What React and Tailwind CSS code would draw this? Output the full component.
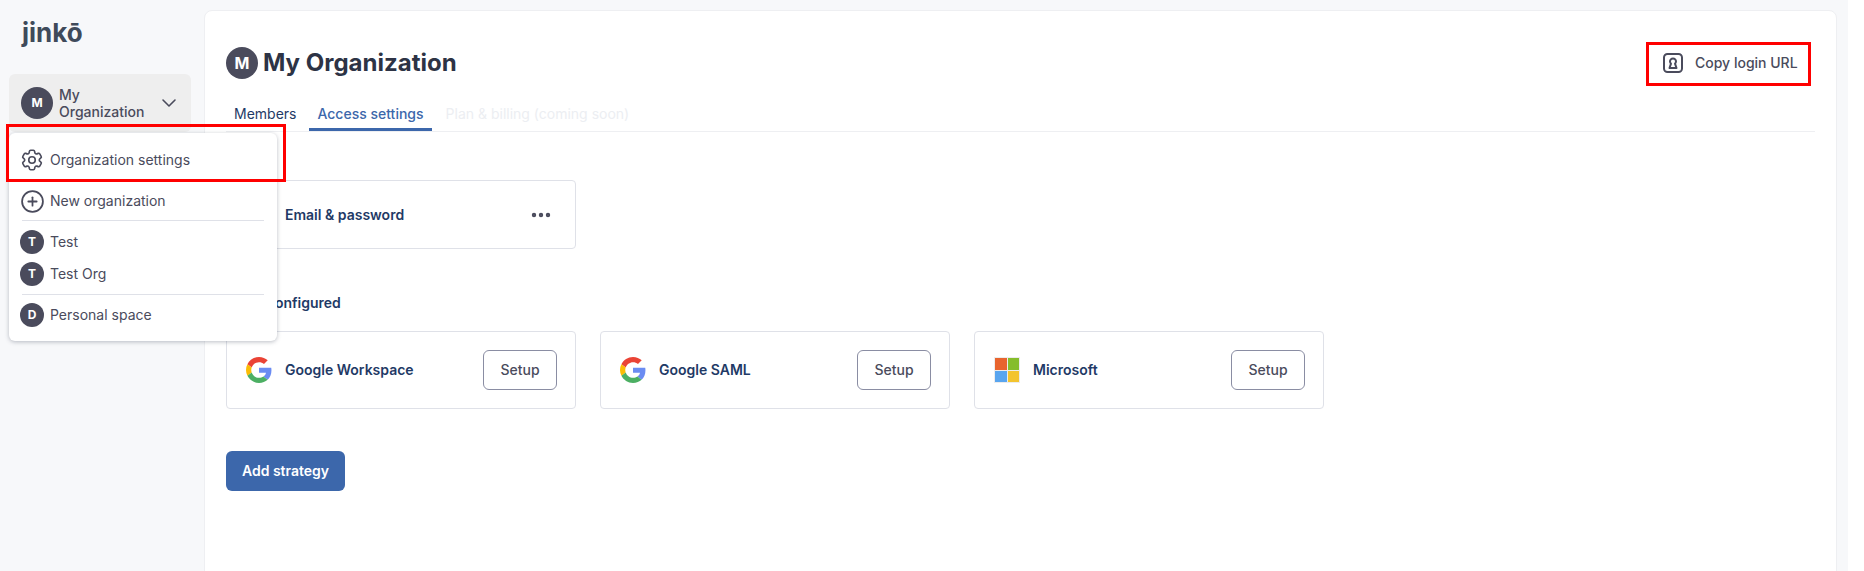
import { ChevronDown, CirclePlus, Ellipsis } from "lucide-react";
import { HiOutlineCog6Tooth } from "react-icons/hi2";

const font = "font-['Inter',sans-serif]";

function Avatar({ letter, size }) {
  return (
    <div
      className={`flex shrink-0 items-center justify-center rounded-full bg-[#4a4b5c] font-bold text-white ${
        size === "lg" ? "h-8 w-8 text-base" : size === "md" ? "h-8 w-8 text-xs" : "h-6 w-6 text-xs"
      }`}
    >
      {letter}
    </div>
  );
}

function GoogleIcon() {
  return (
    <svg viewBox="0 0 48 48" className="h-[26px] w-[26px] shrink-0">
      <path fill="#EA4335" d="M24 9.500c3.500 0 6.700 1.200 9.200 3.600l6.900-6.900C35.900 2.400 30.500 0 24 0 14.600 0 6.500 5.400 2.600 13.200l8 6.200C12.500 13.700 17.800 9.500 24 9.500z" />
      <path fill="#6B8CF2" d="M47 24.500c0-1.600-.1-3.100-.4-4.500H24v9h12.900c-.6 3-2.200 5.400-4.700 7.100l7.700 6C44.400 38.400 47 32 47 24.500z" />
      <path fill="#FBBC05" d="M10.500 28.600c-.5-1.400-.8-3-.8-4.600s.3-3.200.8-4.600l-8-6.200C.9 16.500 0 20.100 0 24s.9 7.500 2.600 10.800l7.900-6.200z" />
      <path fill="#4CAF63" d="M24 48c6.500 0 11.900-2.100 15.900-5.800l-7.700-6c-2.200 1.400-4.900 2.300-8.200 2.300-6.200 0-11.500-4.200-13.400-9.900l-8 6.200C6.500 42.600 14.600 48 24 48z" />
    </svg>
  );
}

function MicrosoftIcon() {
  return (
    <div className="grid h-[26px] w-[26px] shrink-0 grid-cols-2 gap-px bg-[#ececec] p-px">
      <div className="bg-[#e8642e]" />
      <div className="bg-[#85bd2b]" />
      <div className="bg-[#59a5ef]" />
      <div className="bg-[#f3c42f]" />
    </div>
  );
}

function KeyholeIcon() {
  return (
    <svg viewBox="0 0 20 20" fill="none" stroke="#4a4b5c" strokeWidth="2" className="h-5 w-5 shrink-0">
      <rect x="1" y="1" width="18" height="18" rx="3.500" />
      <path strokeLinejoin="round" d="M6.500 15h7l-1.500-4.300a3 3 0 1 0-4 0z" />
    </svg>
  );
}

function StrategyCard({ icon, name, children }) {
  return (
    <div className="flex w-[350px] items-center rounded border border-[#dfe1e8] bg-white pl-[19px] pr-[18px]">
      <div className="w-[39px] shrink-0">{icon}</div>
      <span className="flex-1 text-sm font-semibold text-[#1f3a66]">{name}</span>
      {children}
    </div>
  );
}

function SetupButton() {
  return (
    <button className="h-10 w-[74px] rounded-md border border-[#8a8da3] text-sm font-medium text-[#4a4b5c]">
      Setup
    </button>
  );
}

function MenuRow({ icon, label }) {
  return (
    <div className="flex h-6 items-center gap-[6px] text-sm text-[#4a4b5c]">
      <div className="flex w-6 shrink-0 justify-center">{icon}</div>
      {label}
    </div>
  );
}

function OrgMenu() {
  return (
    <div className="absolute left-[9px] top-[133px] z-10 w-[268px] rounded-md bg-white px-[11px] pb-[14px] pt-[15px] shadow-[0_1px_4px_rgba(60,70,90,0.35)]">
      <MenuRow icon={<HiOutlineCog6Tooth size={26} className="shrink-0 text-[#4a4b5c]" />} label="Organization settings" />
      <div className="mt-[17px]">
        <MenuRow icon={<CirclePlus size={25} strokeWidth={1.7} className="shrink-0 text-[#4a4b5c]" />} label="New organization" />
      </div>
      <div className="ml-[2px] mr-[2px] mt-[7px] border-t border-[#dfe1e8]" />
      <div className="mt-[9px] flex flex-col gap-2">
        <MenuRow icon={<Avatar letter="T" />} label="Test" />
        <MenuRow icon={<Avatar letter="T" />} label="Test Org" />
      </div>
      <div className="ml-[2px] mr-[2px] mt-2 border-t border-[#dfe1e8]" />
      <div className="mt-2">
        <MenuRow icon={<Avatar letter="D" />} label="Personal space" />
      </div>
    </div>
  );
}

export default function App() {
  return (
    <div className={`relative h-[571px] w-[1864px] overflow-hidden bg-white ${font}`}>
      <div className="flex h-full w-[1848px] bg-[#f7f8fa]">
        {/* sidebar */}
        <div className="w-[204px] shrink-0 px-[9px]">
          <div className="ml-[13px] mt-[13px] h-[61px] text-[26px] font-bold leading-[40px] text-[#3f4a5a]">
            jinkō
          </div>
          <div className="flex h-[58px] w-[182px] items-center gap-[6px] rounded-md bg-[#eeeeee] pl-3 pr-[10px]">
            <Avatar letter="M" size="md" />
            <span className="flex-1 text-sm font-medium leading-[17px] text-[#4a4b5c]">My Organization</span>
            <ChevronDown size={24} strokeWidth={1.6} className="text-[#4a4b5c]" />
          </div>
        </div>

        {/* main */}
        <div className="mt-[10px] mb-[-10px] w-[1633px] rounded-t-lg border border-[#eeeff2] bg-white px-[21px]">
          <div className="mt-[36px] flex items-center gap-[5px]">
            <Avatar letter="M" size="lg" />
            <h1 className="text-2xl font-bold text-[#2d3345]">My Organization</h1>
          </div>
          <div className="mt-[16px] flex h-[37px] border-b border-[#eeeff2] text-sm">
            <div className="px-2 pt-[9px] text-[#1f3a66]">Members</div>
            <div className="ml-[5px] border-b-[3px] border-[#3c67ab] px-2 pt-[9px] font-medium text-[#3c67ab]">Access settings</div>
            <div className="ml-[6px] px-2 pt-[9px] text-[#eceef2]">Plan &amp; billing (coming soon)</div>
          </div>

          <div className="mt-[14px] h-[18px] text-sm font-semibold text-[#1f3a66]">Active</div>
          <div className="mt-[16px] flex h-[69px]">
            <StrategyCard icon={<div className="h-[26px] w-[26px]" />} name="Email & password">
              <Ellipsis size={24} strokeWidth={2.4} className="mr-1 text-[#4a4b5c]" />
            </StrategyCard>
          </div>

          <div className="mt-[44px] h-[18px] text-sm font-semibold text-[#1f3a66]">To be configured</div>
          <div className="mt-[20px] flex h-[78px] gap-6">
            <StrategyCard icon={<GoogleIcon />} name="Google Workspace"><SetupButton /></StrategyCard>
            <StrategyCard icon={<GoogleIcon />} name="Google SAML"><SetupButton /></StrategyCard>
            <StrategyCard icon={<MicrosoftIcon />} name="Microsoft"><SetupButton /></StrategyCard>
          </div>

          <button className="mt-[42px] h-10 w-[119px] rounded-md bg-[#3c67ab] text-sm font-semibold text-white">
            Add strategy
          </button>
        </div>
      </div>

      {/* copy login url, over the card header */}
      <div className="absolute left-[1663px] top-[53px] flex items-center gap-3 text-sm font-medium text-[#4a4b5c]">
        <KeyholeIcon />
        Copy login URL
      </div>

      <OrgMenu />

      {/* red annotation boxes */}
      <div className="absolute left-[6px] top-[124px] z-20 h-[58px] w-[280px] border-[3px] border-[#ff0000]" />
      <div className="absolute left-[1646px] top-[42px] z-20 h-[44px] w-[165px] border-[3px] border-[#ff0000]" />
    </div>
  );
}
